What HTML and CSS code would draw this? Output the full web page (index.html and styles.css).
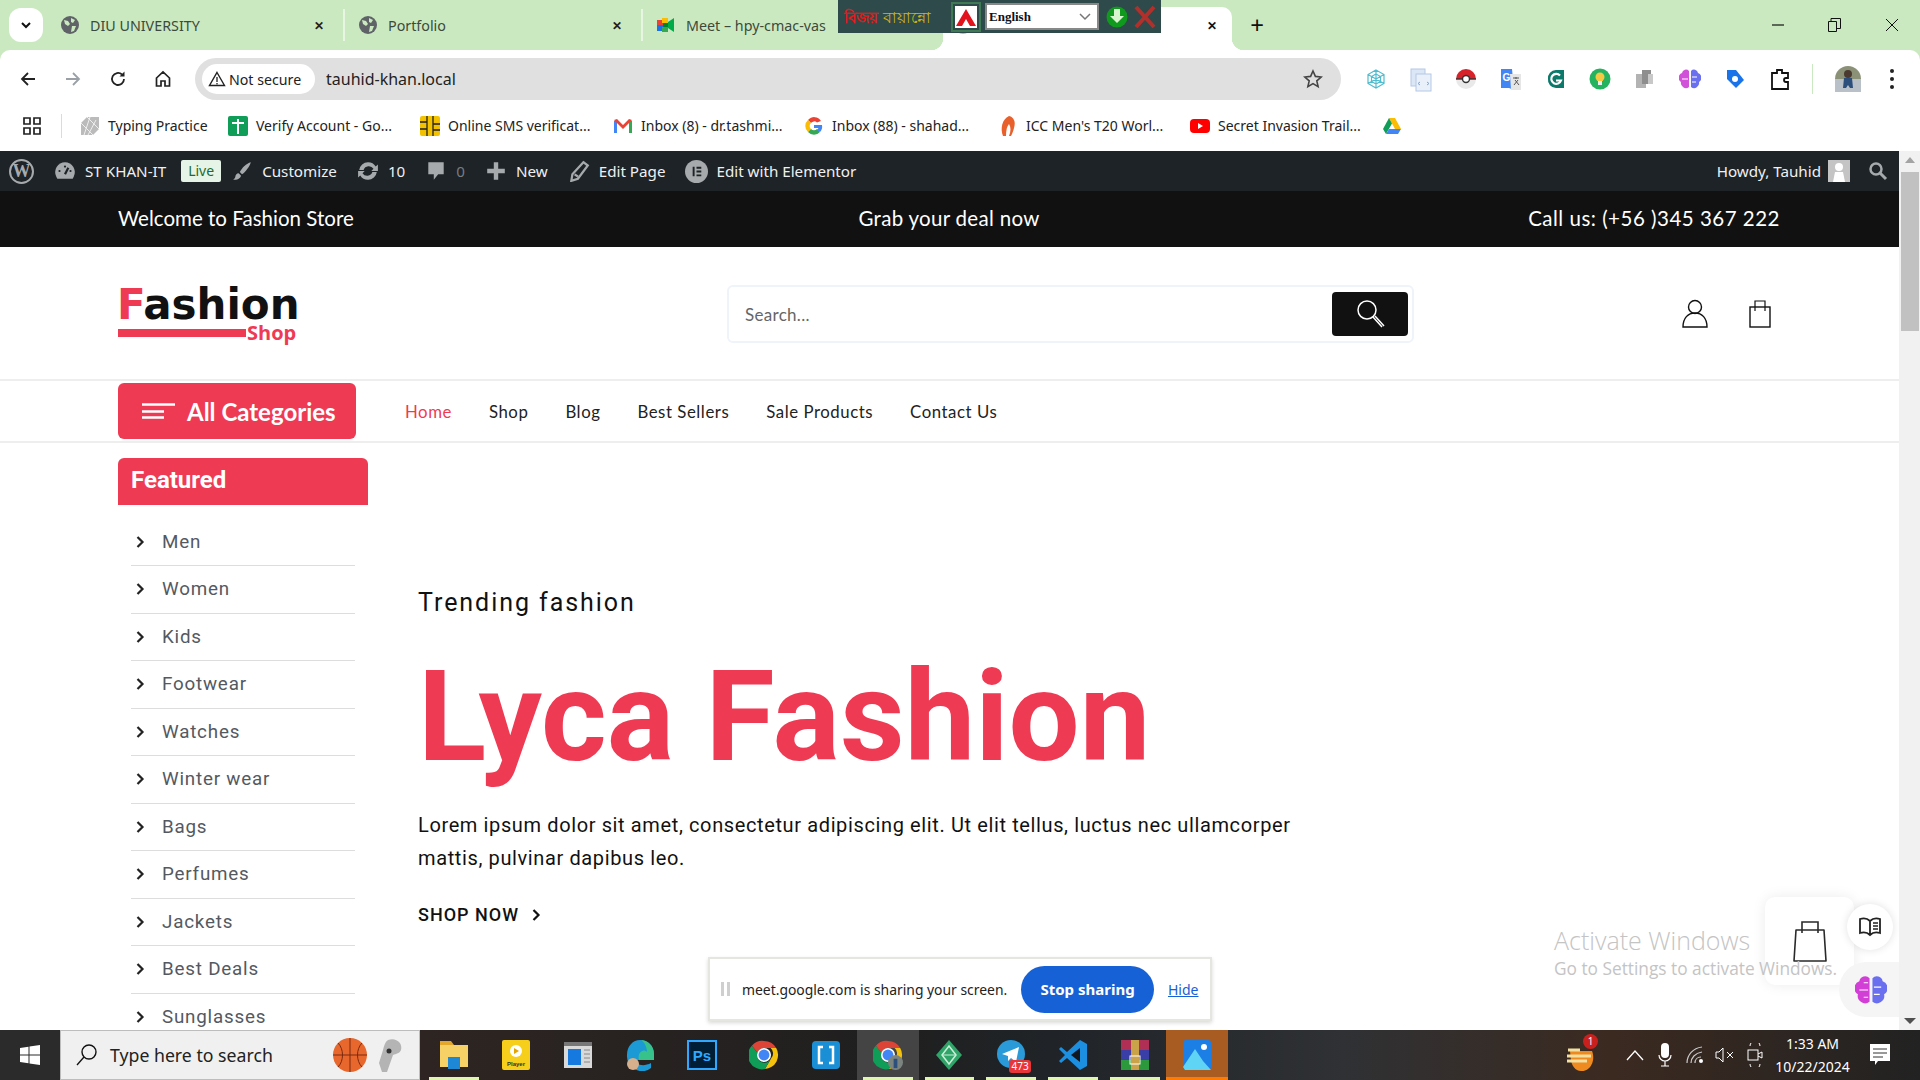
FILE: index.html
```html
<!DOCTYPE html>
<html lang="en">
<head>
<meta charset="utf-8">
<title>Lyca Fashion</title>
<link rel="stylesheet" href="styles.css">
</head>
<body>
<div class="chrome">
  <div class="tabstrip">
    <div class="tabsearch"><svg width="12" height="12" viewBox="0 0 12 12"><path d="M2 4l4 4 4-4" fill="none" stroke="#111" stroke-width="2"/></svg></div>
    <div class="tab"><svg class="fav" viewBox="0 0 18 18"><circle cx="9" cy="9" r="9" fill="#5f6368"/><path d="M3 4l4 1 2 3-2 2-3-2zM10 2l4 2-2 3-2-1zM11 10l4 0-2 5-3 1z" fill="#cbe9c0"/></svg><span class="tabtitle">DIU UNIVERSITY</span><span class="tabx">✕</span></div>
    <div class="tab"><svg class="fav" viewBox="0 0 18 18"><circle cx="9" cy="9" r="9" fill="#5f6368"/><path d="M3 4l4 1 2 3-2 2-3-2zM10 2l4 2-2 3-2-1zM11 10l4 0-2 5-3 1z" fill="#cbe9c0"/></svg><span class="tabtitle">Portfolio</span><span class="tabx">✕</span></div>
    <div class="tab tab-last"><svg class="fav" viewBox="0 0 18 18"><rect x="0" y="4" width="6" height="5" fill="#ea4335"/><rect x="0" y="9" width="6" height="6" fill="#1a73e8"/><rect x="5" y="2" width="6" height="5" fill="#fbbc04"/><rect x="5" y="11" width="6" height="5" fill="#34a853"/><rect x="6" y="7" width="5" height="4" fill="#00832d"/><path d="M11 6l6-4v14l-6-4z" fill="#00ac47"/></svg><span class="tabtitle">Meet – hpy-cmac-vas</span></div>
    <div class="tab-active"><span class="activefav"></span><span class="tabx tabx-active">✕</span></div>
    <span class="newtab">+</span>
    <div class="winctl">
      <span class="wc"><svg width="12" height="12" viewBox="0 0 12 12"><path d="M0 6h12" stroke="#111" stroke-width="1.2"/></svg></span>
      <span class="wc"><svg width="13" height="14" viewBox="0 0 13 14"><path d="M.5 3.5h8v10h-8zM3 3.5V.5h9.500v10H8.500" fill="none" stroke="#111"/></svg></span>
      <span class="wc"><svg width="14" height="14" viewBox="0 0 14 14"><path d="M1 1l12 12M13 1L1 13" stroke="#111"/></svg></span>
    </div>
  </div>
  <div class="toolbar">
    <span class="tb"><svg width="18" height="18" viewBox="0 0 18 18"><path d="M16 9H3M9 3L3 9l6 6" fill="none" stroke="#222" stroke-width="1.800"/></svg></span>
    <span class="tb"><svg width="18" height="18" viewBox="0 0 18 18"><path d="M2 9h13M9 3l6 6-6 6" fill="none" stroke="#9aa0a6" stroke-width="1.800"/></svg></span>
    <span class="tb"><svg width="18" height="18" viewBox="0 0 18 18"><path d="M15 9a6 6 0 1 1-2-4.500" fill="none" stroke="#222" stroke-width="1.800"/><path d="M15.500 1.500v5h-5z" fill="#222"/></svg></span>
    <span class="tb"><svg width="18" height="18" viewBox="0 0 18 18"><path d="M2.500 8L9 2l6.500 6v8h-4.500v-5H7v5H2.500z" fill="none" stroke="#222" stroke-width="1.700"/></svg></span>
    <div class="address">
      <span class="secure"><svg width="18" height="16" viewBox="0 0 18 16"><path d="M9 1.500l7.500 13h-15z" fill="none" stroke="#222" stroke-width="1.400"/><path d="M9 6v5M9 12v1.400" stroke="#222" stroke-width="1.300"/></svg>Not secure</span>
      <span class="url">tauhid-khan.local</span>
      <svg class="star" width="20" height="20" viewBox="0 0 20 20"><path d="M10 2l2.400 5.400 5.800.6-4.400 3.900 1.300 5.700-5.100-3-5.100 3 1.300-5.700L1.800 8l5.800-.6z" fill="none" stroke="#444" stroke-width="1.600"/></svg>
    </div>
    <div class="exts">
      <span class="ext"><svg width="22" height="22" viewBox="0 0 22 22"><path d="M11 2l8 4.500v9L11 20l-8-4.500v-9zM11 6l4.500 2.500v5L11 16l-4.500-2.500v-5zM11 2v18M3 6.500l16 9M19 6.500l-16 9" fill="none" stroke="#52bccf" stroke-width="1.200"/></svg></span>
      <span class="ext"><svg width="22" height="24" viewBox="0 0 22 24"><rect x="1" y="1" width="14" height="17" fill="#dbe6f6" stroke="#b6c8e6"/><rect x="6" y="6" width="15" height="17" fill="#e9f0fa" stroke="#b6c8e6"/><path d="M10 14l-2 1.500 2 1.500M17 14l2 1.500-2 1.500" fill="none" stroke="#7ea6dc"/></svg></span>
      <span class="ext"><svg width="22" height="22" viewBox="0 0 22 22"><path d="M1 11a10 10 0 0 1 20 0z" fill="#d8222a"/><path d="M1 11a10 10 0 0 0 20 0z" fill="#e9e9e9"/><path d="M1 11h20" stroke="#333" stroke-width="1.400"/><circle cx="11" cy="11" r="3.500" fill="#fff" stroke="#333" stroke-width="1.400"/></svg></span>
      <span class="ext"><svg width="22" height="24" viewBox="0 0 22 24"><path d="M1 1h11l2 21-5-2H1z" fill="#4285f4"/><path d="M10 6h11v16H11z" fill="#e6e6e6"/><text x="2.500" y="13" class="extg">G</text><path d="M13 10h6M16 9v2M14 17l4-5M15 12l4 5" stroke="#555" stroke-width="1" fill="none"/></svg></span>
      <span class="ext"><svg width="22" height="22" viewBox="0 0 22 22"><path d="M3 11a8 8 0 0 1 8-9h8v18h-8a8 8 0 0 1-8-9z" fill="#0b7a6b"/><path d="M15 7.500a5 5 0 1 0 1 5h-5" fill="none" stroke="#fff" stroke-width="2.200"/></svg></span>
      <span class="ext"><svg width="22" height="22" viewBox="0 0 22 22"><circle cx="11" cy="11" r="10.500" fill="#25b35f"/><circle cx="11" cy="9" r="4.500" fill="#f6c945"/><rect x="9" y="13" width="4" height="4" fill="#e8eef0"/></svg></span>
      <span class="ext"><svg width="22" height="22" viewBox="0 0 22 22"><rect x="2" y="6" width="10" height="14" fill="#b3b3b3"/><rect x="8" y="2" width="9" height="14" fill="#8e8e8e"/><rect x="14" y="6" width="5" height="10" fill="#c8c8c8"/></svg></span>
      <span class="ext"><svg width="22" height="22" viewBox="0 0 22 22"><path d="M10 3a4 4 0 0 0-7 2 5 5 0 0 0-1 9 5 5 0 0 0 8 5z" fill="#d152d8"/><path d="M12 3a4 4 0 0 1 7 2 5 5 0 0 1 1 9 5 5 0 0 1-8 5z" fill="#6a6ff0"/><path d="M3 11h6M13 9l5 0M13 14l4 0" stroke="#fff"/></svg></span>
      <span class="ext"><svg width="22" height="22" viewBox="0 0 22 22"><path d="M3 2h9l8 10-8 8-9-9z" fill="#1a73e8"/><circle cx="11" cy="11" r="3" fill="#fff"/></svg></span>
      <span class="ext"><svg width="20" height="22" viewBox="0 0 20 22"><path d="M2 5h5V2h5v3h6v5h-2a2 2 0 0 0 0 4h2v7H2z" fill="none" stroke="#111" stroke-width="1.800"/></svg></span>
    </div>
    <span class="tbsep"></span>
    <span class="profile"><svg width="26" height="26" viewBox="0 0 26 26"><circle cx="13" cy="13" r="13" fill="#8a9176"/><path d="M0 13h26v13H0z" fill="#b9c0c8"/><circle cx="13" cy="8" r="4" fill="#4b3a30"/><path d="M9 12h8l1 10h-3l-2-3-2 3H8z" fill="#2d4f7c"/></svg></span>
    <span class="kebab"><i></i><i></i><i></i></span>
  </div>
  <div class="bookmarks">
    <svg class="apps" width="18" height="18" viewBox="0 0 18 18"><path d="M1 1h6v6H1zM11 1h6v6h-6zM1 11h6v6H1zM11 11h6v6h-6z" fill="none" stroke="#222" stroke-width="1.700"/></svg>
    <span class="bmsep"></span>
    <div class="bmgrid">
      <span class="bm"><svg class="bmi" viewBox="0 0 20 20"><path d="M7 1h12v12l-6 6H1V7z" fill="#bbb"/><path d="M7 1l12 12M1 7l12 12M10 1L4 19M16 4L8 19" stroke="#eee"/></svg>Typing Practice</span>
      <span class="bm"><svg class="bmi" viewBox="0 0 20 20"><rect width="20" height="20" y="0" rx="2" fill="#0f9d58"/><path d="M4 7h12M10 3v15" stroke="#fff" stroke-width="2"/></svg>Verify Account - Go...</span>
      <span class="bm"><svg class="bmi" viewBox="0 0 20 20"><rect x="0" y="0" width="20" height="20" rx="2" fill="#f2c200"/><path d="M7 0v20M13 0v8h7M0 6h7M0 13h7M13 8v12M13 14h7" stroke="#222" stroke-width="1.300" fill="none"/></svg>Online SMS verificat...</span>
      <span class="bm"><svg class="bmi" viewBox="0 0 20 20"><path d="M1 5l3-1v13H1z" fill="#4285f4"/><path d="M16 4l3 1v12h-3z" fill="#34a853"/><path d="M1 4l3-1 6 6 6-6 3 1-9 9z" fill="#ea4335"/></svg>Inbox (8) - dr.tashmi...</span>
      <span class="bm"><svg class="bmi" viewBox="0 0 20 20"><path d="M17 5a8 8 0 0 0-13-1l3 3a4 4 0 0 1 6-.5z" fill="#ea4335"/><path d="M4 4a8 8 0 0 0 0 12l3-3a4 4 0 0 1 0-6z" fill="#fbbc04"/><path d="M4 16a8 8 0 0 0 12 0l-3-3a4 4 0 0 1-6 0z" fill="#34a853"/><path d="M18 9h-8v3h4.500L13 14l3 2a8 8 0 0 0 2-7z" fill="#4285f4"/></svg>Inbox (88) - shahad...</span>
      <span class="bm"><svg class="bmi" viewBox="0 0 20 20"><path d="M11 0c5 1 7 6 5 12-1 4-2 6-3 8h-2c2-5 2-9 0-12-2 2-3 6-3 12H5C2 13 4 3 11 0z" fill="#e8602c"/></svg>ICC Men's T20 Worl...</span>
      <span class="bm"><svg class="bmi" viewBox="0 0 20 20"><rect y="3" width="20" height="14" rx="4" fill="#f00"/><path d="M8 7l5 3-5 3z" fill="#fff"/></svg>Secret Invasion Trail...</span>
      <span class="bm"><svg class="bmi" viewBox="0 0 20 20"><path d="M7 2h6l6 11h-6z" fill="#fbbc04"/><path d="M7 2l3 5.500L4 18 1 13z" fill="#0f9d58"/><path d="M7 13h12l-3 5H4z" fill="#4285f4"/></svg></span>
    </div>
  </div>
</div>

<div class="page">
  <div class="view">
    <div class="wpbar">
      <span class="wpitem"><span class="wplogo">W</span></span>
      <span class="wpitem"><svg class="wpi" viewBox="0 0 20 20"><path d="M10 2a9 9 0 0 0-8 13l1 2h14l1-2a9 9 0 0 0-8-13z" fill="#a7aaad"/><path d="M10 13l3-6" stroke="#1d2327" stroke-width="2"/><circle cx="5" cy="10" r="1" fill="#1d2327"/><circle cx="15" cy="10" r="1" fill="#1d2327"/><circle cx="10" cy="6" r="1" fill="#1d2327"/></svg>ST KHAN-IT</span>
      <span class="live">Live</span>
      <span class="wpitem wp-customize"><svg class="wpi" viewBox="0 0 20 20"><path d="M18 2c-4 1-8 5-10 9l2 2c3-2 7-7 8-11zM7 12c-2 0-3 2-3 3s-1 2-2 3c3 0 7-1 7-4z" fill="#a7aaad"/></svg>Customize</span>
      <span class="wpitem"><svg class="wpi" viewBox="0 0 20 20"><path d="M10 2a8 8 0 0 1 7 4l2-2v6h-6l2-2a5 5 0 0 0-9 1H2a8 8 0 0 1 8-7zM10 18a8 8 0 0 1-7-4l-2 2v-6h6l-2 2a5 5 0 0 0 9-1h4a8 8 0 0 1-8 7z" fill="#a7aaad"/></svg>10</span>
      <span class="wpitem wp-muted"><svg class="wpi" viewBox="0 0 20 20"><path d="M3 2h14v11h-5l-4 5v-5H3z" fill="#a7aaad"/></svg>0</span>
      <span class="wpitem"><svg class="wpi" viewBox="0 0 20 20"><path d="M8 2h4v6h6v4h-6v6H8v-6H2V8h6z" fill="#a7aaad"/></svg>New</span>
      <span class="wpitem"><svg class="wpi" viewBox="0 0 20 20"><path d="M14 2l4 3-9 12-6 2 1-6zM6 13l3 2" fill="none" stroke="#a7aaad" stroke-width="2"/></svg>Edit Page</span>
      <span class="wpitem wp-elementor"><svg class="wpi wpi-e" viewBox="0 0 24 24"><circle cx="12" cy="12" r="12" fill="#a7aaad"/><path d="M8 7h2v10H8zM12 7h5v2h-5zM12 11h5v2h-5zM12 15h5v2h-5z" fill="#1d2327"/></svg>Edit with Elementor</span>
      <span class="wpright">Howdy, Tauhid<span class="wpavatar"><svg width="22" height="22" viewBox="0 0 22 22"><rect width="22" height="22" fill="#c4c4c4"/><circle cx="11" cy="7" r="4" fill="#fff"/><path d="M5 22l2-10h8l2 10z" fill="#fff"/></svg></span><svg class="wpsearch" width="20" height="20" viewBox="0 0 20 20"><circle cx="8" cy="8" r="5.500" fill="none" stroke="#a7aaad" stroke-width="2.500"/><path d="M12 12l6 6" stroke="#a7aaad" stroke-width="3"/></svg></span>
    </div>

    <div class="topbar">
      <span class="topbar-left">Welcome to Fashion Store</span>
      <span class="topbar-mid">Grab your deal now</span>
      <span class="topbar-right">Call us: (+56 )345 367 222</span>
    </div>

    <header class="header">
      <div class="logo">
        <div class="logo-word"><span class="logo-f">F</span>ashion</div>
        <div class="logo-sub"><span class="logo-bar"></span><span class="logo-shop">Shop</span></div>
      </div>
      <div class="search">
        <span class="search-ph">Search...</span>
        <span class="search-btn"><svg width="32" height="32" viewBox="0 0 32 32"><circle cx="13" cy="12" r="9" fill="none" stroke="#fff" stroke-width="1.500"/><path d="M19 19l9 10M21 18l9 10" stroke="#fff" stroke-width="1.500"/></svg></span>
      </div>
      <div class="header-icons">
        <svg width="28" height="30" viewBox="0 0 28 30"><circle cx="14" cy="8" r="6.500" fill="none" stroke="#111" stroke-width="1.400"/><path d="M2 28c0-9 5-14 12-14s12 5 12 14z" fill="none" stroke="#111" stroke-width="1.400"/></svg>
        <svg width="24" height="30" viewBox="0 0 24 30"><rect x="2" y="8" width="20" height="20" fill="none" stroke="#111" stroke-width="1.400"/><path d="M7 12V2h10v10" fill="none" stroke="#111" stroke-width="1.200"/></svg>
      </div>
    </header>

    <nav class="nav">
      <span class="allcats"><svg width="33" height="16" viewBox="0 0 33 16"><path d="M0 1.500h33M0 8.500h22M0 14.500h22" stroke="#fff" stroke-width="2.600"/></svg>All Categories</span>
      <ul class="navlinks">
        <li class="navlink-on">Home</li><li>Shop</li><li>Blog</li><li>Best Sellers</li><li>Sale Products</li><li>Contact Us</li>
      </ul>
    </nav>

    <main class="main">
      <aside class="side">
        <h3 class="side-head">Featured</h3>
        <ul class="side-list">
          <li><svg class="chev" viewBox="0 0 9 12"><path d="M1.500 1l5 5-5 5" fill="none" stroke="#222" stroke-width="2.200"/></svg>Men</li>
          <li><svg class="chev" viewBox="0 0 9 12"><path d="M1.500 1l5 5-5 5" fill="none" stroke="#222" stroke-width="2.200"/></svg>Women</li>
          <li><svg class="chev" viewBox="0 0 9 12"><path d="M1.500 1l5 5-5 5" fill="none" stroke="#222" stroke-width="2.200"/></svg>Kids</li>
          <li><svg class="chev" viewBox="0 0 9 12"><path d="M1.500 1l5 5-5 5" fill="none" stroke="#222" stroke-width="2.200"/></svg>Footwear</li>
          <li><svg class="chev" viewBox="0 0 9 12"><path d="M1.500 1l5 5-5 5" fill="none" stroke="#222" stroke-width="2.200"/></svg>Watches</li>
          <li><svg class="chev" viewBox="0 0 9 12"><path d="M1.500 1l5 5-5 5" fill="none" stroke="#222" stroke-width="2.200"/></svg>Winter wear</li>
          <li><svg class="chev" viewBox="0 0 9 12"><path d="M1.500 1l5 5-5 5" fill="none" stroke="#222" stroke-width="2.200"/></svg>Bags</li>
          <li><svg class="chev" viewBox="0 0 9 12"><path d="M1.500 1l5 5-5 5" fill="none" stroke="#222" stroke-width="2.200"/></svg>Perfumes</li>
          <li><svg class="chev" viewBox="0 0 9 12"><path d="M1.500 1l5 5-5 5" fill="none" stroke="#222" stroke-width="2.200"/></svg>Jackets</li>
          <li><svg class="chev" viewBox="0 0 9 12"><path d="M1.500 1l5 5-5 5" fill="none" stroke="#222" stroke-width="2.200"/></svg>Best Deals</li>
          <li><svg class="chev" viewBox="0 0 9 12"><path d="M1.500 1l5 5-5 5" fill="none" stroke="#222" stroke-width="2.200"/></svg>Sunglasses</li>
        </ul>
      </aside>
      <section class="hero">
        <p class="hero-kicker">Trending fashion</p>
        <h1 class="hero-title">Lyca Fashion</h1>
        <p class="hero-text">Lorem ipsum dolor sit amet, consectetur adipiscing elit. Ut elit tellus, luctus nec ullamcorper mattis, pulvinar dapibus leo.</p>
        <span class="hero-cta">SHOP NOW<svg class="chev" viewBox="0 0 9 12"><path d="M1.500 1l5 5-5 5" fill="none" stroke="#111" stroke-width="2.200"/></svg></span>
      </section>
    </main>

    <div class="float-cart"><svg width="36" height="44" viewBox="0 0 36 44"><path d="M4 11h28l2 31H2z" fill="none" stroke="#2a2a2a" stroke-width="1.600" stroke-linejoin="round"/><path d="M10 14V3h16v11" fill="none" stroke="#2a2a2a" stroke-width="1.600"/></svg></div>
    <div class="float-book"><svg width="22" height="20" viewBox="0 0 22 20"><path d="M11 4C8 1 4 1 1 2v14c3-1 7-1 10 2 3-3 7-3 10-2V2c-3-1-7-1-10 2zM11 4v14" fill="none" stroke="#222" stroke-width="1.800"/><path d="M14 6h5M14 9h5M14 12h5" stroke="#222" stroke-width="1.300"/></svg></div>
    <div class="float-brain"><svg width="32" height="32" viewBox="0 0 22 22"><path d="M10 3a4 4 0 0 0-7 2 5 5 0 0 0-1 9 5 5 0 0 0 8 5z" fill="#d23fd6"/><path d="M12 3a4 4 0 0 1 7 2 5 5 0 0 1 1 9 5 5 0 0 1-8 5z" fill="#6a6ff0"/><path d="M3 11h6M13 9h5M13 14h4M6 6h3M6 16h3" stroke="#fff" stroke-width=".8"/></svg></div>
    <div class="activate">
      <div class="activate-title">Activate Windows</div>
      <div class="activate-sub">Go to Settings to activate Windows.</div>
    </div>
    <div class="sharebar">
      <span class="sharegrip"><i></i><i></i></span>
      <span class="sharetext">meet.google.com is sharing your screen.</span>
      <span class="sharebtn">Stop sharing</span>
      <span class="sharehide">Hide</span>
    </div>
  </div>
  <div class="scrollbar">
    <span class="sb-up"></span>
    <span class="sb-thumb"></span>
    <span class="sb-down"></span>
  </div>
</div>

<footer class="taskbar">
  <span class="startbtn"><svg width="22" height="22" viewBox="0 0 22 22"><path d="M1 4l8.500-1.200v7.700H1zM10.500 2.600L21 1v9.500H10.500zM1 11.500h8.500v7.700L1 18zM10.500 11.500H21V21l-10.500-1.500z" fill="#fff"/></svg></span>
  <div class="tasksearch">
    <svg width="24" height="24" viewBox="0 0 24 24"><circle cx="14" cy="9" r="7" fill="none" stroke="#111" stroke-width="1.400"/><path d="M9 14l-7 8" stroke="#111" stroke-width="1.400"/></svg>
    <span class="tasksearch-text">Type here to search</span>
    <svg class="ts-ball" width="36" height="36" viewBox="0 0 36 36"><circle cx="18" cy="18" r="17" fill="#e8672c"/><path d="M18 1v34M1 18h34M6 6c6 6 6 18 0 24M30 6c-6 6-6 18 0 24" stroke="#7a2a10" fill="none"/></svg>
    <svg class="ts-pod" width="30" height="36" viewBox="0 0 30 36"><path d="M14 3c8-3 15 3 13 10-1 3-5 4-8 5l-6 17H8l-3-9 4-13c1-4 2-8 5-10z" fill="#b4b4b4"/><circle cx="15" cy="14" r="2.500" fill="#333"/></svg>
  </div>
  <div class="taskapps">
    <span class="app app-on"><svg class="appi" viewBox="0 0 30 32"><path d="M1 2h11l3 4H1z" fill="#e3a82b"/><path d="M1 6h28v22H1z" fill="#f6d266"/><rect x="9" y="18" width="12" height="12" fill="#1e88d6"/></svg></span>
    <span class="app"><svg class="appi" viewBox="0 0 30 32"><rect x="1" y="1" width="28" height="30" rx="2" fill="#f5cf1c"/><circle cx="15" cy="12" r="6" fill="#fff"/><path d="M13 9l5 3-5 3z" fill="#e6a400"/><text x="15" y="27" class="potplayer">Player</text></svg></span>
    <span class="app"><svg class="appi" viewBox="0 0 30 32"><rect x="1" y="3" width="28" height="26" fill="#d9d9d9"/><rect x="1" y="3" width="28" height="4" fill="#777"/><rect x="5" y="10" width="13" height="16" fill="#1679e0"/><path d="M21 11h6M21 15h6M21 19h6M21 23h6" stroke="#888"/></svg></span>
    <span class="app"><svg class="appi" viewBox="0 0 30 32"><path d="M15 1c8 0 14 6 14 14v6H10c0 5 9 7 16 3v5a15 15 0 0 1-24-13C2 7 8 1 15 1z" fill="#1c9ad6"/><path d="M15 1c8 0 14 6 14 14v6H14c-2-8 5-12 8-8 0-6-4-12-7-12z" fill="#37c28c"/><circle cx="8" cy="25" r="6" fill="#d6b08c"/></svg></span>
    <span class="app"><svg class="appi" viewBox="0 0 30 32"><rect x="1" y="2" width="28" height="28" fill="#001e36" stroke="#31a8ff" stroke-width="2"/><text x="15" y="22" class="psmark">Ps</text></svg></span>
    <span class="app"><svg class="appi" viewBox="0 0 32 32"><use href="#chromeicon"/></svg></span>
    <span class="app"><svg class="appi" viewBox="0 0 30 32"><rect x="1" y="2" width="28" height="28" rx="4" fill="#1a8fd6"/><path d="M12 8H8v16h4M18 8h4v16h-4" fill="none" stroke="#fff" stroke-width="2.500"/></svg></span>
    <span class="app app-on app-active"><svg class="appi" viewBox="0 0 32 32"><use href="#chromeicon"/><circle cx="24" cy="24" r="8" fill="#7c8480"/><path d="M22 20h4v10h-4z" fill="#2d4f7c"/></svg></span>
    <span class="app app-on"><svg class="appi" viewBox="0 0 30 32"><path d="M15 1l13 15-13 15L2 16z" fill="#2fa56a"/><path d="M15 7l7 9-7 9-7-9z" fill="none" stroke="#cdeed8" stroke-width="1.500"/><path d="M9 16h12" stroke="#cdeed8"/></svg></span>
    <span class="app app-on"><svg class="appi" viewBox="0 0 30 32"><circle cx="15" cy="15" r="14" fill="#2a9bd8"/><path d="M6 15l17-7-3 15-5-4-3 3v-5z" fill="#fff"/></svg><span class="badge473">473</span></span>
    <span class="app app-on"><svg class="appi" viewBox="0 0 30 32"><path d="M22 1l7 4v22l-7 4L9 19l-6 5-2-2 6-6-6-6 2-2 6 5z" fill="#1c8fe0"/><path d="M22 9v14l-9-7z" fill="#121820"/></svg></span>
    <span class="app app-on"><svg class="appi" viewBox="0 0 30 32"><rect x="1" y="1" width="28" height="10" fill="#b02f55"/><rect x="1" y="11" width="28" height="10" fill="#3a3fa8"/><rect x="1" y="21" width="28" height="10" fill="#2c9a3c"/><rect x="11" y="1" width="8" height="30" fill="#caa24a"/><rect x="10" y="17" width="10" height="8" fill="none" stroke="#fff"/></svg></span>
    <span class="app app-photos"><svg class="appi" viewBox="0 0 30 32"><rect x="1" y="1" width="28" height="30" rx="3" fill="#1c7fe6"/><circle cx="22" cy="8" r="3" fill="#fff"/><path d="M1 28l12-18 8 12 8 9H3z" fill="#5fd4f4"/></svg></span>
  </div>
  <div class="tray">
    <span class="tray-hand"><svg width="36" height="36" viewBox="0 0 36 36"><path d="M6 14h22c4 10-2 21-11 20-6 0-9-6-10-10z" fill="#ee8a1f"/><path d="M4 13h12M3 19h24M3 24h20" stroke="#f3e0a0" stroke-width="3"/></svg><span class="handbadge">1</span></span>
    <span class="tr"><svg width="18" height="12" viewBox="0 0 18 12"><path d="M1 11l8-9 8 9" fill="none" stroke="#fff" stroke-width="1.300"/></svg></span>
    <span class="tr"><svg width="14" height="24" viewBox="0 0 14 24"><rect x="3" y="0" width="8" height="15" rx="4" fill="#fff"/><path d="M1 12a6 6 0 0 0 12 0M7 18v5M3 23h8" fill="none" stroke="#fff" stroke-width="1.200"/></svg></span>
    <span class="tr"><svg width="18" height="18" viewBox="0 0 18 18"><path d="M1 17C1 9 7 2 16 1M5 17c0-5 4-10 11-11M9 17c0-3 2-6 6-6" fill="none" stroke="#ccc" stroke-width="1.200"/><circle cx="15" cy="15" r="2" fill="#fff"/></svg></span>
    <span class="tr"><svg width="20" height="16" viewBox="0 0 20 16"><path d="M1 5h3l4-4v14l-4-4H1z" fill="none" stroke="#fff"/><path d="M12 5l6 6M18 5l-6 6" stroke="#fff"/></svg></span>
    <span class="tr"><svg width="16" height="24" viewBox="0 0 16 24"><path d="M3 3a5 5 0 0 1 10 0M3 21a5 5 0 0 0 10 0" fill="none" stroke="#fff"/><rect x="1" y="7" width="10" height="10" fill="none" stroke="#fff"/><path d="M11 11l4-2v6l-4-2" fill="none" stroke="#fff"/></svg></span>
    <div class="clock"><span>1:33 AM</span><span>10/22/2024</span></div>
    <span class="notif"><svg width="22" height="24" viewBox="0 0 22 24"><path d="M1 1h20v17H9l-3 4v-4H1z" fill="#fff"/><path d="M4 6h14M4 10h14M4 14h10" stroke="#333"/></svg></span>
  </div>
</footer>

<div class="bijoy">
  <span class="bijoy-red">বিজয়</span>
  <span class="bijoy-yellow">বায়ান্নো</span>
  <span class="bijoy-logo"><svg width="22" height="22" viewBox="0 0 22 22"><rect width="22" height="22" fill="#fff"/><path d="M1 20L11 3l10 17h-6l-4-7-4 7z" fill="#e2131d"/></svg></span>
  <span class="bijoy-select">English<svg width="12" height="8" viewBox="0 0 12 8"><path d="M1 1l5 5 5-5" fill="none" stroke="#777" stroke-width="1.500"/></svg></span>
  <svg class="bijoy-go" width="22" height="24" viewBox="0 0 22 24"><circle cx="11" cy="12" r="10.500" fill="#0f9a1e"/><path d="M8 4h6v7h4l-7 7-7-7h4z" fill="#d8f5d0"/></svg>
  <svg class="bijoy-x" width="22" height="24" viewBox="0 0 22 24"><path d="M2 2l18 20M20 2L2 22" stroke="#b2302c" stroke-width="4"/></svg>
</div>

<svg class="defs" width="0" height="0"><defs><g id="chromeicon"><path d="M16 1a15 15 0 0 1 13 7.500H16a7.500 7.500 0 0 0-7 5L3 6a15 15 0 0 1 13-5z" fill="#db4437"/><path d="M29 8.500A15 15 0 0 1 17 31l7-12a7.500 7.500 0 0 0-1-10.500z" fill="#f4c20d"/><path d="M3 6a15 15 0 0 0 14 25l7-12a7.500 7.500 0 0 1-15-5.500z" fill="#0f9d58"/><circle cx="16" cy="16" r="7.500" fill="#fff"/><circle cx="16" cy="16" r="5.800" fill="#4285f4"/></g></defs></svg>
</body>
</html>
```
FILE: styles.css
```css
* { box-sizing: border-box; }
html, body { margin: 0; padding: 0; }
body {
  width: 1920px; height: 1080px; overflow: hidden; position: relative;
  display: flex; flex-direction: column; background: #fff;
  font-family: "Noto Sans", sans-serif;
}
ul { list-style: none; margin: 0; padding: 0; }
h1, h3, p { margin: 0; }
svg { display: block; flex: none; }
.defs { position: absolute; }

/* browser chrome */
.chrome { background: #cbe9c0; height: 151px; flex: none; display: flex; flex-direction: column; }
.tabstrip { height: 50px; display: flex; align-items: center; flex: none; }
.tabsearch { margin-left: 9px; margin-right: 4px; width: 34px; height: 34px; border-radius: 12px; background: #fff; display: flex; align-items: center; justify-content: center; }
.tab { width: 298px; height: 32px; padding: 0 19px 0 14px; display: flex; align-items: center; gap: 11px; border-right: 2px solid #e8f5e2; font-size: 14.300px; color: #3c4a3c; flex: none; }
.tab-last { width: 300px; border: 0; }
.fav { width: 18px; height: 18px; }
.tabtitle { flex: 1; white-space: nowrap; overflow: hidden; }
.tabx { font-size: 12px; color: #222; font-weight: 700; }
.tab-active { position: relative; width: 289px; height: 43px; align-self: flex-end; background: #fff; border-radius: 10px 10px 0 0; display: flex; align-items: center; justify-content: space-between; padding: 0 15px 6px 12px; flex: none; }
.tab-active::before, .tab-active::after { content: ""; position: absolute; bottom: 0; width: 12px; height: 12px; }
.tab-active::before { left: -12px; background: radial-gradient(circle at 0 0, #cbe9c0 12px, #fff 12.500px); }
.tab-active::after { right: -12px; background: radial-gradient(circle at 100% 0, #cbe9c0 12px, #fff 12.500px); }
.activefav { width: 16px; height: 16px; border-radius: 50%; background: #8cc4e8; }
.tabx-active { color: #111; font-size: 12px; }
.newtab { margin-left: 15px; width: 20px; text-align: center; font-size: 24px; line-height: 24px; color: #111; }
.winctl { margin-left: auto; display: flex; }
.wc { width: 57px; height: 30px; display: flex; align-items: center; justify-content: center; }

.toolbar { height: 58px; background: #fff; border-radius: 10px 10px 0 0; display: flex; align-items: center; padding-left: 5px; flex: none; }
.tb { width: 45px; display: flex; justify-content: center; }
.address { margin-left: 10px; width: 1146px; height: 42px; border-radius: 21px; background: #e0e0e0; display: flex; align-items: center; padding: 0 18px 0 7px; }
.secure { height: 30px; width: 113px; border-radius: 15px; background: #fff; display: flex; align-items: center; gap: 3px; padding-left: 6px; font-size: 14.200px; color: #222; white-space: nowrap; flex: none; }
.url { margin-left: 11px; font-size: 16px; color: #222; }
.star { margin-left: auto; }
.exts { display: flex; margin-left: 13px; padding-top: 2px; }
.ext { width: 44.800px; display: flex; justify-content: center; }
.extg { font: 700 10px "Liberation Sans", sans-serif; fill: #fff; }
.tbsep { width: 1px; height: 30px; background: #cbe9c0; margin-left: 10px; }
.profile { margin-left: 22px; }
.kebab { margin-left: 29px; display: flex; flex-direction: column; gap: 4px; }
.kebab i { width: 4px; height: 4px; border-radius: 50%; background: #222; display: block; }

.bookmarks { height: 43px; background: #fff; display: flex; align-items: flex-start; padding-left: 23px; flex: none; }
.apps { margin-top: 9px; }
.bmsep { width: 1px; height: 24px; background: #cbe9c0; margin: 6px 18px 0 20px; }
.bmgrid { display: grid; grid-template-columns: 148px 192px 193px 191px 194px 192px 192px auto; height: 35px; align-items: center; }
.bm { display: flex; align-items: center; gap: 8px; font-size: 14px; color: #222; white-space: nowrap; }
.bmi { width: 20px; height: 20px; }

/* page */
.page { flex: 1; min-height: 0; display: flex; }
.view { flex: 1; min-width: 0; overflow: hidden; position: relative; background: #fff; }
.scrollbar { width: 21px; background: #f1f1f1; display: flex; flex-direction: column; align-items: center; }
.sb-up { margin-top: 6px; border: 5px solid transparent; border-top: 0; border-bottom: 6px solid #a3a3a3; }
.sb-thumb { margin-top: 9px; width: 18px; height: 159px; background: #c1c1c1; }
.sb-down { margin-top: auto; margin-bottom: 6px; border: 6px solid transparent; border-bottom: 0; border-top: 6px solid #505050; }

.wpbar { height: 40px; background: #1d2327; color: #f0f0f1; display: flex; align-items: center; font-size: 15.200px; padding-left: 9px; gap: 20px; white-space: nowrap; }
.wpitem { display: flex; align-items: center; gap: 9px; }
.wp-elementor { gap: 8px; }
.wplogo { width: 25px; height: 25px; border-radius: 50%; border: 2px solid #a7aaad; color: #a7aaad; font: 700 18px/21px "Liberation Serif", serif; text-align: center; display: block; }
.wpi { width: 22px; height: 22px; }
.wpi-e { width: 23px; height: 23px; }
.live { background: #e6f4e8; color: #1d6b2f; border-radius: 2px; height: 22px; width: 40px; line-height: 22px; text-align: center; font-size: 14px; margin-left: -5px; }
.wp-customize { margin-left: -10px; }
.wp-muted { color: #787c82; }
.wpright { margin-left: auto; display: flex; align-items: center; padding-right: 11px; }
.wpavatar { margin-left: 7px; margin-right: 18px; display: block; }

.topbar { height: 56px; background: #111; color: #fff; display: grid; grid-template-columns: 1fr auto 1fr; align-items: center; padding: 0 119px 3px 118px; font-family: Lato, sans-serif; font-size: 20.500px; }
.topbar-left { letter-spacing: .02px; }
.topbar-mid { letter-spacing: .3px; }
.topbar-right { text-align: right; letter-spacing: .5px; }

.header { height: 132px; display: flex; align-items: center; padding: 2px 0 0 118px; }
.logo { width: 609px; padding-top: 1px; color: #111; font-family: "DejaVu Sans", sans-serif; font-weight: 700; }
.logo-word { font-size: 42px; line-height: 36px; margin-left: -1px; }
.logo-f { color: #ef3a54; }
.logo-sub { display: flex; align-items: center; height: 20px; }
.logo-bar { width: 128px; height: 8px; background: #ef3a54; }
.logo-shop { margin-left: 1px; color: #ef3a54; font-family: "Open Sans", sans-serif; font-size: 20px; line-height: 20px; font-weight: 700; }
.search { width: 687px; height: 58px; border: 2px solid #eef4fa; border-radius: 6px; display: flex; align-items: center; justify-content: space-between; padding: 0 4px 0 16px; }
.search-ph { font-family: Lato, sans-serif; font-size: 17px; color: #666; letter-spacing: .3px; }
.search-btn { width: 76px; height: 44px; background: #111; border-radius: 4px; display: flex; align-items: center; justify-content: center; }
.header-icons { margin-left: 267px; display: flex; align-items: center; gap: 39px; }

.nav { height: 64px; border-top: 2px solid #eee; border-bottom: 2px solid #eee; display: flex; align-items: center; padding-left: 118px; }
.allcats { width: 238px; height: 56px; background: #ef3a54; border-radius: 6px; color: #fff; display: flex; align-items: center; gap: 12px; padding-left: 24px; font-family: Lato, sans-serif; font-weight: 700; font-size: 24px; white-space: nowrap; flex: none; }
.navlinks { display: flex; gap: 37px; margin-left: 49px; font-family: Lato, sans-serif; font-size: 16.800px; letter-spacing: .55px; color: #222; }
.navlink-on { color: #ef3a54; }

.main { display: flex; padding-left: 118px; }
.side { width: 250px; margin-top: 15px; flex: none; }
.side-head { height: 47px; background: #ef3a54; border-radius: 6px 6px 0 0; color: #fff; font-family: Roboto, sans-serif; font-weight: 700; font-size: 24px; line-height: 45px; padding-left: 13px; }
.side-list { margin: 13.500px 13px 0; }
.side-list li { height: 47.500px; border-bottom: 1px solid #ddd; display: flex; align-items: center; gap: 17px; padding-left: 5px; font-family: Roboto, sans-serif; font-size: 18.800px; letter-spacing: .8px; color: #54595f; }
.chev { width: 9px; height: 12px; }
.hero { margin-left: 50px; padding-top: 145px; width: 900px; }
.hero-kicker { font-family: Roboto, sans-serif; font-size: 25px; line-height: 30px; letter-spacing: 1.950px; color: #111; }
.hero-title { margin-top: 29px; font-family: Roboto, sans-serif; font-weight: 700; font-size: 126px; line-height: 140px; color: #ef3a54; white-space: nowrap; }
.hero-text { margin-top: 22px; font-family: Roboto, sans-serif; font-size: 20px; line-height: 33px; letter-spacing: .62px; color: #111; }
.hero-cta { margin-top: 28px; display: flex; align-items: center; gap: 13px; font-family: Roboto, sans-serif; font-weight: 500; font-size: 18px; line-height: 24px; letter-spacing: 1px; color: #111; }

/* floating layers */
.float-cart { position: absolute; left: 1765px; top: 746px; width: 89px; height: 88px; border-radius: 10px; background: #fff; box-shadow: 0 0 14px rgba(0,0,0,.08); display: flex; align-items: center; justify-content: center; }
.float-book { position: absolute; left: 1847px; top: 753px; width: 46px; height: 46px; border-radius: 50%; background: #fff; box-shadow: 0 0 8px rgba(0,0,0,.12); display: flex; align-items: center; justify-content: center; }
.float-brain { position: absolute; left: 1839px; top: 811px; width: 60px; height: 55px; border-radius: 28px 0 0 28px; background: #f5f5f5; display: flex; align-items: center; justify-content: center; padding-left: 4px; }
.activate { position: absolute; left: 1554px; top: 772px; color: #c4c4c4; font-family: "Open Sans", sans-serif; white-space: nowrap; }
.activate-title { font-size: 25px; line-height: 34px; font-weight: 300; }
.activate-sub { font-size: 17.300px; line-height: 24px; }
.sharebar { position: absolute; left: 708px; top: 806px; width: 504px; height: 64px; background: #fff; border: 2px solid #e6e6e0; box-shadow: 0 2px 4px rgba(0,0,0,.15); display: flex; align-items: center; padding-left: 11px; }
.sharegrip { display: flex; gap: 3px; }
.sharegrip i { display: block; width: 3px; height: 14px; background: #cfcfcf; }
.sharetext { margin-left: 12px; font-size: 13.900px; color: #222; white-space: nowrap; width: 279px; }
.sharebtn { width: 133px; height: 47px; border-radius: 24px; background: #1761d6; color: #fff; font-size: 15px; font-weight: 700; line-height: 47px; text-align: center; flex: none; }
.sharehide { margin-left: 14px; font-size: 14px; color: #1761d6; text-decoration: underline; }

/* taskbar */
.taskbar { height: 50px; flex: none; display: flex; align-items: stretch; background: linear-gradient(90deg, #2b2b2b 0, #2e2522 22%, #1f1f1f 47%, #202428 55%, #2f3134 70%, #3b2a20 84%, #222 100%); }
.startbtn { width: 60px; display: flex; align-items: center; justify-content: center; background: #2b2b2b; }
.tasksearch { width: 360px; background: #f0f0f0; border: 1px solid #bdbdbd; display: flex; align-items: center; padding-left: 14px; flex: none; }
.tasksearch-text { margin-left: 11px; font-size: 17.700px; color: #222; white-space: nowrap; }
.ts-ball { margin-left: 59px; }
.ts-pod { margin-left: 6px; }
.taskapps { display: flex; margin-left: 3px; }
.app { width: 61.950px; display: flex; align-items: center; justify-content: center; position: relative; }
.appi { width: 30px; height: 32px; }
.app-on::after { content: ""; position: absolute; left: 6px; right: 6px; bottom: 0; height: 3px; background: #dff5b0; }
.app-active { background: #444; }
.app-photos { background: #a85c22; }
.app-photos::after { content: ""; position: absolute; left: 0; right: 0; bottom: 0; height: 3px; background: #ff7a00; }
.potplayer { font: 700 6px "Liberation Sans", sans-serif; fill: #333; text-anchor: middle; }
.psmark { font: 700 15px "Liberation Sans", sans-serif; fill: #31a8ff; text-anchor: middle; }
.badge473 { position: absolute; left: 29px; bottom: 7px; background: #e8353a; color: #fff; font-size: 10px; line-height: 13px; padding: 0 2px; border-radius: 3px; }
.tray { margin-left: auto; display: flex; align-items: center; color: #fff; padding-right: 19px; }
.tray-hand { width: 40px; position: relative; margin-right: 18px; display: flex; justify-content: center; }
.handbadge { position: absolute; left: 21px; top: -3px; width: 15px; height: 15px; border-radius: 50%; background: #c8211d; color: #fff; font-size: 10px; line-height: 15px; text-align: center; }
.tr { width: 30px; display: flex; justify-content: center; }
.clock { width: 85px; display: flex; flex-direction: column; align-items: center; gap: 4px; font-size: 14px; line-height: 19px; white-space: nowrap; }
.notif { width: 46px; display: flex; justify-content: center; padding-left: 4px; }

.bijoy { position: absolute; left: 838px; top: 0; width: 323px; height: 33px; background: #2f4a4a; display: flex; align-items: center; padding-left: 6px; }
.bijoy-red { color: #e01b1b; font-size: 15px; font-weight: 700; line-height: 30px; width: 39px; white-space: nowrap; overflow: hidden; }
.bijoy-yellow { color: #c9b616; font-size: 16px; line-height: 30px; width: 68px; white-space: nowrap; }
.bijoy-logo { border: 2px solid #3f7a55; padding: 2px; flex: none; }
.bijoy-select { width: 114px; height: 27px; background: #fff; border: 2px solid #888; display: flex; align-items: center; justify-content: space-between; padding: 0 6px 0 2px; font: 700 13px "Liberation Serif", serif; color: #111; margin-left: 4px; flex: none; }
.bijoy-go { margin-left: 7px; }
.bijoy-x { margin-left: 6px; }
```
